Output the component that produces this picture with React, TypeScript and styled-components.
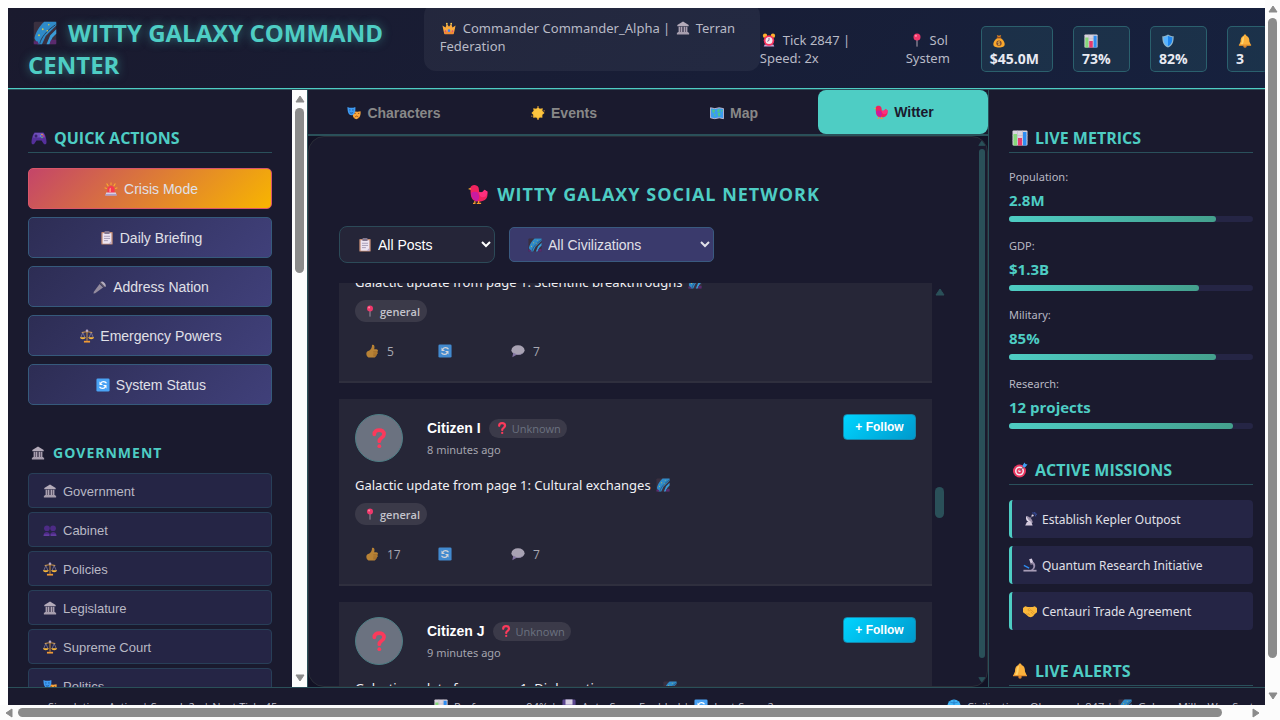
import React, { useLayoutEffect, useRef } from "react";
import styled, { createGlobalStyle, css } from "styled-components";

const ui = '"Open Sans", "Noto Sans", sans-serif';
const control = '"Liberation Sans", Arial, sans-serif';
const reading = '"Noto Sans", "Open Sans", sans-serif';
const teal = "#4ecdc4";
const tealDim = "#2a5059";
const tealFaint = "rgba(78, 205, 196, 0.3)";
const night = "#1a1a2e";

const GlobalStyle = createGlobalStyle`
  * { box-sizing: border-box; }
  body { margin: 0; background: #fff; font-family: ${ui}; color: #e0e0e8; overflow: hidden; }
  h1, h2, h3, p, ul { margin: 0; padding: 0; }
  ul { list-style: none; }
`;

/* ---------- icons ---------- */

const art: Record<string, React.ReactNode> = {
  galaxy: (
    <>
      <rect x="1" y="1" width="30" height="30" rx="2" fill="#3a3040" />
      <path d="M2 23C3 16 9 6 15 1h16v5L17 20l-5 11H6z" fill="#2f8ac8" />
      <path d="M31 11l-8 8-5 12h4l4-9 5-5z" fill="#3a9bd6" />
      <path d="M9 30c2-8 8-16 21-25" fill="none" stroke="#25405e" strokeWidth="1.300" />
      <path d="M1 27h5l2 4H1zM24 25h7v6h-9z" fill="#5a2a6e" />
      <g fill="#d9c84a">
        <circle cx="13" cy="11" r="1.200" /><circle cx="8" cy="19" r="1.200" /><circle cx="21" cy="5" r="1" /><circle cx="19" cy="13" r="1" />
      </g>
    </>
  ),
  crown: (
    <>
      <path d="M1 10l7 5 3-9 5 7 5-7 3 9 7-5-4 19H5z" fill="#fbab3c" />
      <path d="M5 24h22l-1 6H6z" fill="#f08a34" />
      <circle cx="16" cy="22" r="3" fill="#3f7df0" /><circle cx="8" cy="23" r="2" fill="#e0457b" /><circle cx="24" cy="23" r="2" fill="#e0457b" />
      <circle cx="11" cy="6" r="2" fill="#ffd257" /><circle cx="21" cy="6" r="2" fill="#ffd257" />
    </>
  ),
  building: (
    <>
      <path d="M16 1l13 8v3H3V9z" fill="#b4abba" />
      <path d="M6 13h3v12H6zM11.500 13h3v12h-3zM17.500 13h3v12h-3zM23 13h3v12h-3z" fill="#b4abba" />
      <path d="M9 13h2.500v12H9zM14.500 13h3v12h-3zM20.500 13H23v12h-2.500z" fill="#665d72" />
      <path d="M4 25h24v2h2v4H2v-4h2z" fill="#a79eae" />
    </>
  ),
  clock: (
    <>
      <circle cx="7" cy="6" r="5" fill="#ffb02e" /><circle cx="25" cy="6" r="5" fill="#ffb02e" />
      <path d="M6 26l-2 5h24l-2-5z" fill="#c9a3d8" />
      <circle cx="16" cy="17" r="12" fill="#f8315f" /><circle cx="16" cy="17" r="8" fill="#f4e6ee" />
      <path d="M16 11v6l-4 2" fill="none" stroke="#6d5580" strokeWidth="2" />
    </>
  ),
  pin: (
    <>
      <path d="M14.500 15h3v15l-1.500 2-1.500-2z" fill="#8f8797" />
      <circle cx="16" cy="9" r="8" fill="#f0386b" /><circle cx="13.500" cy="6.500" r="2.500" fill="#ff8aa5" />
    </>
  ),
  money: (
    <>
      <path d="M11 2l5 2 5-2-2 6h-6z" fill="#d97b1e" />
      <path d="M12 9h8c6 4 9 10 9 14 0 6-5 8-13 8S3 29 3 23c0-4 3-10 9-14z" fill="#f9a72b" />
      <path d="M11 7h10v3H11z" fill="#8a4b2a" />
      <circle cx="16" cy="21" r="6" fill="#7a4a33" />
      <path d="M18.500 18.500c-2-1.500-5-.8-5 .8 0 2.400 5 1 5 3.400 0 1.700-3 2.300-5 .8M16 16.500v9" fill="none" stroke="#ffc94d" strokeWidth="1.400" />
    </>
  ),
  chart: (
    <>
      <rect x="1" y="1" width="30" height="30" rx="2" fill="#d9d3de" />
      <path d="M1 11h30M1 21h30M11 1v30M21 1v30" stroke="#b9b0c2" strokeWidth="1" />
      <rect x="3" y="8" width="7" height="23" fill="#86d97a" /><rect x="12" y="16" width="8" height="15" fill="#e63b6f" /><rect x="22" y="4" width="7" height="27" fill="#2f8df2" />
    </>
  ),
  shield: (
    <>
      <path d="M16 1c4 3 8 4 13 4 0 13-2 21-13 26C5 26 3 18 3 5c5 0 9-1 13-4z" fill="#8fb6cc" />
      <path d="M16 4c3 2 6 3 10 3.500C26 18 24 24 16 28z" fill="#1d85ee" />
      <path d="M16 4C13 6 10 7 6 7.500 6 18 8 24 16 28z" fill="#58b4ff" />
    </>
  ),
  bell: (
    <>
      <circle cx="16" cy="28" r="3.500" fill="#d9822b" />
      <path d="M16 1c2 0 3 1 3 3 6 2 7 7 7 13l4 9H2l4-9C6 11 7 6 13 4c0-2 1-3 3-3z" fill="#fbb13c" />
      <path d="M14 5C9 8 9 13 9 18l-3 6h5l2-7z" fill="#ffd36b" />
      <path d="M2 24h28v2.500H2z" fill="#e8912d" />
    </>
  ),
  gamepad: (
    <>
      <path d="M7 5h18c4 4 6 14 6 20 0 4-4 5-6 2l-4-6H11l-4 6c-2 3-6 2-6-2C1 19 3 9 7 5z" fill="#55309b" />
      <path d="M8 6h16c2 2 3 5 4 9H4c1-4 2-7 4-9z" fill="#6f4fb8" />
      <path d="M10 9v6M7 12h6" stroke="#271650" strokeWidth="2" />
      <circle cx="22" cy="9" r="1.500" fill="#ffb02e" /><circle cx="25" cy="12" r="1.500" fill="#f8315f" /><circle cx="19" cy="12" r="1.500" fill="#3fa9ff" /><circle cx="22" cy="15" r="1.500" fill="#5fd06a" />
    </>
  ),
  siren: (
    <>
      <path d="M15 1h2v6h-2zM5 4l2-1 4 6-2 1zM27 4l-2-1-4 6 2 1zM1 14l1-2 5 2-1 2zM31 14l-1-2-5 2 1 2z" fill="#ffb02e" />
      <path d="M8 25V17a8 8 0 0116 0v8z" fill="#f8394f" /><path d="M12 23v-6a4 4 0 014-4v10z" fill="#ff8a80" />
      <path d="M5 24h22l2 7H3z" fill="#d8cfe6" /><path d="M3.500 28h25l.5 3H3z" fill="#9d8fc0" />
    </>
  ),
  clipboard: (
    <>
      <rect x="3" y="2" width="26" height="29" rx="2" fill="#c08a72" /><rect x="6" y="5" width="20" height="24" fill="#ede5f2" />
      <rect x="10" y="0" width="12" height="7" rx="2" fill="#82778f" />
      <path d="M9 12h14M9 17h14M9 22h9" stroke="#9f95b0" strokeWidth="2" />
      <path d="M20 29l6-6v6z" fill="#b9a9cc" />
    </>
  ),
  mic: (
    <>
      <path d="M15 9l8 8L5 30l-4 1 1-4z" fill="#948c9e" />
      <path d="M15 7l10 10 4-3L18 3z" fill="#5c5666" />
      <path d="M18 5c3-6 15 6 10 11z" fill="#b5aebf" />
    </>
  ),
  scales: (
    <>
      <path d="M15 2h2v25h-2zM4 7l12-2 12 2v2L16 7 4 9z" fill="#e8a33a" />
      <path d="M6.500 8L1.500 20M6.500 8l5 12M25.500 8l-5 12M25.500 8l5 12" stroke="#a79bb8" strokeWidth="1.300" fill="none" />
      <path d="M0 19h13c0 6-13 6-13 0zM19 19h13c0 6-13 6-13 0z" fill="#f7b63b" />
      <path d="M9 27h14v4H9z" fill="#f09a35" /><circle cx="16" cy="4" r="3" fill="#b7a8c9" />
    </>
  ),
  sync: (
    <>
      <rect x="1" y="1" width="30" height="30" rx="3" fill="#4aa3f5" />
      <path d="M24 12c-3-5-10-5-13-1M8 20c3 5 10 5 13 1" fill="none" stroke="#fff" strokeWidth="3" />
      <path d="M8 8v8h8zM24 24v-8h-8z" fill="#fff" />
    </>
  ),
  people: (
    <g fill="#4d2b86">
      <circle cx="9" cy="12" r="6.500" /><path d="M1 29c0-11 15-11 15 0z" /><circle cx="23" cy="12" r="6.500" /><path d="M16 29c0-11 15-11 15 0z" />
      <path d="M3 26h11v3H1zM18 26h11l2 3H18z" fill="#6d45ae" />
    </g>
  ),
  masks: (
    <>
      <path d="M13 11c5 2 12 3 18 1 1 9-2 17-10 18-7-1-9-8-8-19z" fill="#fba63a" />
      <path d="M1 2c6 3 12 3 18 0 1 10-1 18-9 19C3 20 1 12 1 2z" fill="#3f9bf3" />
      <path d="M5 9h3M12 9h3M6 14c2 3 6 3 8 0" fill="none" stroke="#124a8c" strokeWidth="2" />
      <path d="M17 17h3M25 17h3M18 26c2-4 6-4 8 0" fill="none" stroke="#8a4b1c" strokeWidth="2" />
    </>
  ),
  star: (
    <>
      <path d="M16 2l4 4 7-1-1 6 5 5-5 4 0 7-6-1-4 5-4-5-7 1 0-7-4-4 5-5-1-6 7 1z" fill="#f7bb36" />
      <circle cx="16" cy="16" r="10" fill="#fdc540" />
      <g fill="#f2a93b"><circle cx="16" cy="1.500" r="1.500" /><circle cx="30" cy="11" r="1.500" /><circle cx="16" cy="30.500" r="1.500" /><circle cx="2" cy="23" r="1.500" /></g>
    </>
  ),
  map: (
    <>
      <path d="M1 4l10 2 10-2 10 2v23l-10-2-10 2-10-2z" fill="#3b9cf0" stroke="#c9c0d6" strokeWidth="2" />
      <path d="M4 8l8 1-2 6-3 2zM9 17l4 3-2 6zM17 8l6-1-2 6-4 1zM17 16l6-2 1 6-4 5zM25 8l4 2-3 5z" fill="#4fc48d" />
    </>
  ),
  bird: (
    <>
      <path d="M0 8l6-3v5z" fill="#ffb02e" />
      <path d="M4 6c1-6 11-6 13 0l1 7c4 1 6 0 8-4l5 3c1 8-1 12-5 14-5 3-12 3-17 0-5-4-5-11-5-20z" fill="#f0235f" />
      <path d="M5 14c0 7 3 12 9 14 4-3 5-8 2-14-3-2-7-2-11 0z" fill="#c91ba0" />
      <path d="M17 13c5 1 7 0 9-4l5 3c0 5-2 9-7 9-4 0-6-3-7-8z" fill="#ff2f7d" />
      <path d="M11 27v4H8M17 27v4h-3M17 31h4" fill="none" stroke="#f59a2e" strokeWidth="2" />
    </>
  ),
  question: (
    <>
      <path d="M8.500 10c0-9 15.500-9 15.500 0 0 6-7.500 5-7.500 11" fill="none" stroke="#fb3a5b" strokeWidth="6" strokeLinecap="round" />
      <circle cx="16.500" cy="29" r="3" fill="#fb3a5b" />
    </>
  ),
  thumb: (
    <>
      <path d="M10 15c4-3 6-7 6-13 5-2 7 3 5 10h5c5 1 4 5 2 6 2 2 1 5-1 5 1 3-1 4-2 4 0 3-2 4-5 4h-8c-6 0-9-4-9-9 0-4 3-6 7-7z" fill="#dd9a35" />
      <path d="M19 18h9M19 23h8M19 27h6" stroke="#a9681f" strokeWidth="1.500" />
    </>
  ),
  speech: (
    <>
      <ellipse cx="16" cy="14" rx="15" ry="11" fill="#c9c2d2" /><path d="M5 20l-2 10 11-6z" fill="#9a86bd" />
      <path d="M3 19c6 6 20 6 26 0-3 5-9 6-13 6s-10-1-13-6z" fill="#a596bf" />
    </>
  ),
  target: (
    <>
      <circle cx="15" cy="18" r="13" fill="#e8365f" /><circle cx="15" cy="18" r="9" fill="#f3e8f0" /><circle cx="15" cy="18" r="6" fill="#e8365f" /><circle cx="15" cy="18" r="2.500" fill="#f3e8f0" />
      <path d="M15 18L27 6" stroke="#5a5568" strokeWidth="2" /><path d="M21 7l4-6 2 3 4 1-5 6-4-1z" fill="#3fa0f2" />
    </>
  ),
  satellite: (
    <>
      <path d="M8 9c-4 7 2 17 14 15z" fill="#e4dbec" /><path d="M8 9c1 6 7 13 14 15 1-6-8-15-14-15z" fill="#9c91ab" />
      <path d="M15 16l6-7" stroke="#8e849c" strokeWidth="2" /><circle cx="22" cy="8" r="2.500" fill="#e4dbec" />
      <path d="M21 2c5 0 8 3 8 8M25 1c3 0 6 3 6 6" fill="none" stroke="#3a54a8" strokeWidth="2" />
      <path d="M9 23h10l3 8H5z" fill="#d2c8dc" />
    </>
  ),
  microscope: (
    <>
      <path d="M14 3l6-2 4 10-6 3z" fill="#d5cbe0" /><path d="M16 13l6-3 1 4-5 2z" fill="#716882" />
      <path d="M22 8c9 5 7 16 0 20h-6c8-3 10-10 5-15z" fill="#9b8fae" />
      <path d="M2 17l12 6" stroke="#2f8df2" strokeWidth="3" /><path d="M1 27h30v4H1z" fill="#a79cb6" />
    </>
  ),
  handshake: (
    <>
      <path d="M0 9l5-4 6 2h11l5-2 5 4v10l-5 4-4 5-5 2-5-1-6-5-7-5z" fill="#fcb93b" />
      <path d="M16 8l-5 6c2 3 5 1 7-1l8 8M12 21l4 5M8 21l4 4M18 18l5 6" fill="none" stroke="#d38b25" strokeWidth="1.600" />
    </>
  ),
  disk: (
    <>
      <rect x="1" y="1" width="30" height="30" rx="3" fill="#5b4690" /><rect x="8" y="1" width="16" height="12" fill="#d7cfe2" /><rect x="6" y="17" width="20" height="14" fill="#efe9f5" />
    </>
  ),
  globe: (
    <>
      <circle cx="16" cy="16" r="15" fill="#3fb3f5" /><path d="M1 16h30M16 1v30M6 6c6 4 14 4 20 0M6 26c6-4 14-4 20 0" fill="none" stroke="#1b6fc0" strokeWidth="1.500" />
    </>
  ),
};

const Svg = styled.svg<{ $size: number; $lead: number; $gap: number }>`
  flex: none;
  width: ${(p) => p.$size}px;
  height: ${(p) => p.$size}px;
  margin: 0 ${(p) => p.$gap}px 0 ${(p) => p.$lead}px;
  vertical-align: ${(p) => (p.$size > 18 ? -3 : -2)}px;
`;

function Icon({ name, size = 14, lead = 2, gap = 6 }: { name: string; size?: number; lead?: number; gap?: number }) {
  return (
    <Svg viewBox="0 0 32 32" $size={size} $lead={lead} $gap={gap} aria-hidden="true">
      {art[name]}
    </Svg>
  );
}

/* ---------- scroll bars ---------- */

const Bar = styled.div<{ $horizontal?: boolean; $width: number; $track: string }>`
  flex: none;
  display: flex;
  flex-direction: ${(p) => (p.$horizontal ? "row" : "column")};
  align-items: center;
  ${(p) => (p.$horizontal ? "height" : "width")}: ${(p) => p.$width}px;
  padding: ${(p) => (p.$horizontal ? "0 5px" : p.$width > 12 ? "5px 0" : "2px 0")};
  background: ${(p) => p.$track};
  gap: ${(p) => (p.$width > 12 ? 5 : 2)}px;
`;
const Arrow = styled.svg`
  flex: none;
  display: block;
`;
const Rail = styled.div<{ $horizontal?: boolean }>`
  flex: 1;
  align-self: stretch;
  min-height: 0;
  display: flex;
  flex-direction: ${(p) => (p.$horizontal ? "row" : "column")};
  align-items: center;
`;
const Thumb = styled.div<{ $horizontal?: boolean; $thick: number; $color: string }>`
  flex: none;
  border-radius: 5px;
  background: ${(p) => p.$color};
  ${(p) => (p.$horizontal ? "height" : "width")}: ${(p) => p.$thick}px;
`;

interface ScrollBarProps {
  horizontal?: boolean;
  width?: number;
  thick?: number;
  color?: string;
  track?: string;
  start?: number;
  length: number;
  noEnd?: boolean;
}

function ScrollBar({ horizontal, width = 15, thick = 9, color = "#8b8b8b", track = "#fcfcfc", start = 0, length, noEnd }: ScrollBarProps) {
  const back = horizontal ? "M7 1v8L1 5z" : "M1 7h8L5 1z";
  const forth = horizontal ? "M1 1v8l6-4z" : "M1 1h8L5 7z";
  const long = width > 12;
  const box = horizontal ? { width: 8, height: 10, viewBox: "0 0 8 10" } : { width: long ? 10 : 8, height: 8, viewBox: "0 0 10 8" };
  const span = horizontal ? { width: `${length}%` } : { height: `${length}%` };
  return (
    <Bar $horizontal={horizontal} $width={width} $track={track} aria-hidden="true">
      <Arrow {...box}><path d={back} fill={color} stroke={color} strokeLinejoin="round" /></Arrow>
      <Rail $horizontal={horizontal}>
        {!horizontal && start > 0 && <div style={{ height: `${start}%` }} />}
        <Thumb $horizontal={horizontal} $thick={thick} $color={color} style={span} />
      </Rail>
      {!noEnd && <Arrow {...box}><path d={forth} fill={color} stroke={color} strokeLinejoin="round" /></Arrow>}
    </Bar>
  );
}

/* ---------- page frame ---------- */

const Frame = styled.div`
  display: grid;
  grid-template: minmax(0, 1fr) 15px / minmax(0, 1fr) 15px;
  height: 100vh;
`;
const Viewport = styled.div`
  overflow: hidden;
`;
const Corner = styled.div`
  background: #fcfcfc;
`;
const Shell = styled.div`
  display: grid;
  grid-template-columns: minmax(0, 1fr);
  grid-template-rows: auto minmax(0, 1fr) auto;
  width: 100vw;
  height: 100vh;
  margin: 8px 0 0 8px;
  background: ${night};
`;

/* ---------- header ---------- */

const Header = styled.header`
  display: flex;
  align-items: center;
  height: 81px;
  padding: 1px 20px 0;
  overflow: hidden;
  border-bottom: 1px solid ${teal};
  background: linear-gradient(135deg, ${night} 0%, #16213e 100%);
  font: 13px/18px ${reading};
  color: #b8bac6;
`;
const Brand = styled.h1`
  flex: 1;
  font: 700 24px/32px ${ui};
  color: ${teal};
  text-shadow: 0 0 10px rgba(78, 205, 196, 0.5);
`;
const Commander = styled.div`
  flex: 0 0 336px;
  margin-bottom: 24px;
  padding: 16px;
  border-radius: 12px;
  background: rgba(255, 255, 255, 0.05);
`;
const Tick = styled.div`
  flex: 0 0 121px;
`;
const Place = styled.div`
  flex: 0 0 94px;
  text-align: center;
`;
const Stats = styled.div`
  display: flex;
  gap: 20px;
  margin-left: 6px;
`;
const Stat = styled.div`
  display: flex;
  flex-direction: column;
  min-width: 57px;
  padding: 5px 13px 3px 8px;
  border: 1px solid ${tealFaint};
  border-radius: 5px;
  background: rgba(78, 205, 196, 0.1);
  font: 700 14px/18px ${ui};
  color: #e8eaf2;

  &:last-child { min-width: 0; }
  svg { margin: 2px 2px; }
`;

/* ---------- columns ---------- */

const Main = styled.main`
  display: grid;
  grid-template-columns: 300px minmax(0, 1fr) 300px;
  min-height: 0;
  border-top: 1px solid ${tealDim};
`;
const Left = styled.aside`
  display: flex;
  min-height: 0;
  border-right: 1px solid ${tealDim};
`;
const Right = styled.aside`
  min-height: 0;
  overflow: hidden;
  padding: 37px 35px 0 20px;
  border-left: 1px solid ${tealDim};
`;
const LeftBody = styled.div`
  flex: 1;
  overflow: hidden;
  padding: 37px 20px 0;
`;
const Heading = styled.h2<{ $next?: boolean }>`
  display: flex;
  align-items: center;
  margin-top: ${(p) => (p.$next ? 30 : 0)}px;
  margin-bottom: 15px;
  padding-bottom: 3px;
  border-bottom: 1px solid ${tealFaint};
  font-size: 16px;
  line-height: 22px;
  font-weight: 700;
  color: ${teal};
`;
const SubHeading = styled.h3`
  display: flex;
  align-items: center;
  margin: 38px 0 10px;
  font-size: 14px;
  line-height: 20px;
  letter-spacing: 1px;
  font-weight: 700;
  color: ${teal};
`;
const Stack = styled.div<{ $gap: number }>`
  display: flex;
  flex-direction: column;
  gap: ${(p) => p.$gap}px;
`;
const Action = styled.button<{ $alert?: boolean }>`
  flex: none;
  height: 41px;
  padding: 1px 0 0;
  border: 1px solid ${(p) => (p.$alert ? "#d9566a" : "#365a7c")};
  border-radius: 5px;
  background: ${(p) =>
    p.$alert ? "linear-gradient(135deg, #c44569, #f8b500)" : "linear-gradient(135deg, #2d2d54, #40407a)"};
  font: 14px ${control};
  color: #e0e0e8;
`;
const NavItem = styled.button`
  flex: none;
  height: 35px;
  padding: 2px 12px 0;
  border: 1px solid #283f58;
  border-radius: 4px;
  background: #252545;
  text-align: left;
  font: 13px ${control};
  color: #b8b8c4;
`;

/* ---------- centre ---------- */

const Centre = styled.section`
  display: flex;
  flex-direction: column;
  min-width: 0;
  min-height: 0;
  background: #121225;
`;
const Tabs = styled.nav`
  display: grid;
  grid-template-columns: repeat(4, 1fr);
  height: 46px;
  border-bottom: 2px solid ${tealDim};
  background: ${night};
`;
const Tab = styled.button<{ $active?: boolean }>`
  border: 0;
  border-radius: 8px;
  padding: ${(p) => (p.$active ? 0 : 2)}px 0 0;
  background: ${(p) => (p.$active ? teal : "transparent")};
  font: bold 14px ${control};
  color: ${(p) => (p.$active ? night : "#888")};
`;
const Panel = styled.div`
  flex: 1;
  display: flex;
  min-height: 0;
  border: 1px solid #2a2d38;
  border-radius: 16px;
  background: ${night};
  overflow: hidden;
`;
const Feed = styled.div`
  flex: 1;
  min-width: 0;
  display: flex;
  flex-direction: column;
  padding: 44px 30px 0;
`;
const FeedTitle = styled.h2`
  display: flex;
  justify-content: center;
  align-items: center;
  margin-bottom: 19px;
  font-size: 18px;
  line-height: 26px;
  letter-spacing: 1px;
  font-weight: 700;
  color: ${teal};
`;
const Filters = styled.div`
  display: flex;
  align-items: center;
  gap: 14px;
  margin-bottom: 20px;
`;
const Picker = styled.label`
  position: relative;
  display: flex;
  align-items: center;

  svg { position: absolute; left: 17px; pointer-events: none; }
`;
const Select = styled.select<{ $accent?: boolean }>`
  padding: 0 0 0 34px;
  font: 14px ${control};
  border: 1px solid #2c4a58;
  ${(p) =>
    p.$accent
      ? css`width: 205px; height: 35px; border-radius: 5px; border-color: #3a5a80; background: #3a3a6c; color: #e0e0e8;`
      : css`width: 156px; height: 37px; border-radius: 8px; background: #252538; color: #fff;`}
`;
const PostsRow = styled.div`
  flex: 1;
  display: flex;
  min-height: 0;
`;
const Posts = styled.div`
  flex: 1;
  overflow-y: auto;
  scrollbar-width: none;
`;
const Post = styled.article`
  height: 187px;
  margin-bottom: 16px;
  padding: 15px 16px;
  border-bottom: 2px solid #2f2f3e;
  background: #262637;
`;
const PostTop = styled.div`
  display: flex;
  align-items: flex-start;
  height: 60px;
`;
const Avatar = styled.div`
  display: grid;
  place-items: center;
  width: 48px;
  height: 48px;
  margin-right: 24px;
  border: 1px solid #4d7d84;
  border-radius: 50%;
  background: #6b7280;
`;
const Author = styled.div`
  flex: 1;
  padding-top: 5px;
`;
const NameLine = styled.div`
  display: flex;
  align-items: center;
  gap: 8px;
  height: 18px;
  margin-bottom: 4px;
  font: bold 14px ${control};
  color: #fff;
`;
const Pill = styled.span<{ $tag?: boolean }>`
  display: inline-flex;
  align-items: center;
  height: ${(p) => (p.$tag ? 22 : 19)}px;
  padding: 0 ${(p) => (p.$tag ? 7 : 6)}px;
  border-radius: 11px;
  background: #3b3a49;
  font: ${(p) => (p.$tag ? 600 : 400)} 11px ${ui};
  color: ${(p) => (p.$tag ? "#c4c4cc" : "#6b7280")};
`;
const Ago = styled.div`
  font: 11px/18px ${reading};
  color: #a4a4ae;
`;
const Follow = styled.button`
  width: 73px;
  height: 26px;
  padding: 0;
  border: 1px solid #1587ab;
  border-radius: 4px;
  background: linear-gradient(135deg, #00d4ff, #0099cc);
  font: bold 12px ${control};
  color: #fff;
`;
const Message = styled.p`
  margin-bottom: 7px;
  font: 13px/22px ${reading};
  color: #f0f0f4;
`;
const Reactions = styled.div`
  display: flex;
  margin-top: 19px;
  padding-left: 8px;
`;
const Reaction = styled.button`
  width: 73px;
  height: 20px;
  padding: 0;
  border: 0;
  background: none;
  text-align: left;
  font: 12px ${ui};
  color: #a8a8b2;

  svg { opacity: 0.8; }
`;

/* ---------- metrics and missions ---------- */

const Metric = styled.div`
  font: 11px/18px ${reading};
  color: #b8b8c4;
`;
const MetricValue = styled.div`
  margin: 4px 0 6px;
  font: 700 15px/20px ${ui};
  color: ${teal};
`;
const Gauge = styled.div`
  height: 6px;
  border-radius: 3px;
  background: #252545;
`;
const Fill = styled.div`
  height: 100%;
  border-radius: 3px;
  background: linear-gradient(90deg, ${teal}, #44a08d);
`;
const Mission = styled.li`
  display: flex;
  align-items: center;
  height: 38px;
  padding-left: 9px;
  border-left: 3px solid ${teal};
  border-radius: 4px;
  background: #252545;
  font: 12px ${reading};
  color: #e0e0e8;
`;

const Footer = styled.footer`
  display: grid;
  grid-template-columns: 384px 513px 1fr;
  align-items: center;
  height: 41px;
  padding: 0 0 4px 40px;
  border-top: 1px solid ${tealDim};
  font-size: 11px;
  color: #b8b8c4;
  white-space: nowrap;
`;

/* ---------- content ---------- */

const stats = [["money", "$45.0M"], ["chart", "73%"], ["shield", "82%"], ["bell", "3"]];
const actions = [
  ["siren", "Crisis Mode"], ["clipboard", "Daily Briefing"], ["mic", "Address Nation"], ["scales", "Emergency Powers"], ["sync", "System Status"],
];
const offices = [
  ["building", "Government"], ["people", "Cabinet"], ["scales", "Policies"], ["building", "Legislature"], ["scales", "Supreme Court"], ["masks", "Politics"],
];
const tabs = [["masks", "Characters"], ["star", "Events"], ["map", "Map"], ["bird", "Witter"]];
const metrics: [string, string, number][] = [
  ["Population:", "2.8M", 85], ["GDP:", "$1.3B", 78], ["Military:", "85%", 85], ["Research:", "12 projects", 92],
];
const missions = [
  ["satellite", "Establish Kepler Outpost"], ["microscope", "Quantum Research Initiative"], ["handshake", "Centauri Trade Agreement"],
];
const posts = [
  { name: "Citizen H", ago: "7 minutes ago", topic: "Scientific breakthroughs", likes: 5 },
  { name: "Citizen I", ago: "8 minutes ago", topic: "Cultural exchanges", likes: 17 },
  { name: "Citizen J", ago: "9 minutes ago", topic: "Diplomatic progress", likes: 9 },
];

export default function App() {
  const list = useRef<HTMLDivElement>(null);
  useLayoutEffect(() => {
    if (list.current) list.current.scrollTop = 87;
  }, []);

  return (
    <Frame>
      <GlobalStyle />
      <Viewport>
        <Shell>
          <Header>
            <Brand><Icon name="galaxy" size={24} lead={5} gap={11} />WITTY GALAXY COMMAND CENTER</Brand>
            <Commander>
              <Icon name="crown" gap={7} />Commander Commander_Alpha | <Icon name="building" />Terran Federation
            </Commander>
            <Tick><Icon name="clock" gap={7} />Tick 2847 | Speed: 2x</Tick>
            <Place><Icon name="pin" />Sol<br />System</Place>
            <Stats>
              {stats.map(([icon, value]) => <Stat key={icon}><Icon name={icon} />{value}</Stat>)}
            </Stats>
          </Header>

          <Main>
            <Left>
              <LeftBody>
                <Heading><Icon name="gamepad" size={16} lead={3} gap={7} />QUICK ACTIONS</Heading>
                <Stack $gap={8}>
                  {actions.map(([icon, label]) => (
                    <Action key={label} $alert={icon === "siren"}><Icon name={icon} />{label}</Action>
                  ))}
                </Stack>
                <SubHeading><Icon name="building" lead={3} gap={8} />GOVERNMENT</SubHeading>
                <Stack $gap={4}>
                  {offices.map(([icon, label]) => <NavItem key={label}><Icon name={icon} />{label}</NavItem>)}
                </Stack>
              </LeftBody>
              <ScrollBar length={29.5} />
            </Left>

            <Centre>
              <Tabs>
                {tabs.map(([icon, label]) => (
                  <Tab key={label} $active={label === "Witter"}><Icon name={icon} />{label}</Tab>
                ))}
              </Tabs>
              <Panel>
                <Feed>
                  <FeedTitle><Icon name="bird" size={20} gap={9} />WITTY GALAXY SOCIAL NETWORK</FeedTitle>
                  <Filters>
                    <Picker>
                      <Icon name="clipboard" />
                      <Select aria-label="Post type" defaultValue="all"><option value="all">All Posts</option></Select>
                    </Picker>
                    <Picker>
                      <Icon name="galaxy" />
                      <Select $accent aria-label="Civilization" defaultValue="all"><option value="all">All Civilizations</option></Select>
                    </Picker>
                  </Filters>
                  <PostsRow>
                    <Posts ref={list}>
                      {posts.map((post) => (
                        <Post key={post.name}>
                          <PostTop>
                            <Avatar><Icon name="question" size={20} lead={0} gap={0} /></Avatar>
                            <Author>
                              <NameLine>
                                {post.name}
                                <Pill><Icon name="question" size={12} lead={1} gap={4} />Unknown</Pill>
                              </NameLine>
                              <Ago>{post.ago}</Ago>
                            </Author>
                            <Follow>+ Follow</Follow>
                          </PostTop>
                          <Message>Galactic update from page 1: {post.topic} <Icon name="galaxy" /></Message>
                          <Pill $tag><Icon name="pin" size={12} lead={2} gap={4} />general</Pill>
                          <Reactions>
                            <Reaction aria-label="Like"><Icon name="thumb" gap={8} />{post.likes}</Reaction>
                            <Reaction aria-label="Share"><Icon name="sync" /></Reaction>
                            <Reaction aria-label="Comments"><Icon name="speech" gap={8} />7</Reaction>
                          </Reactions>
                        </Post>
                      ))}
                    </Posts>
                    <ScrollBar color={tealDim} track="transparent" start={49} length={8} noEnd />
                  </PostsRow>
                </Feed>
                <ScrollBar width={10} thick={6} color={tealDim} track="transparent" length={97} />
              </Panel>
            </Centre>

            <Right>
              <Heading><Icon name="chart" size={16} lead={3} gap={7} />LIVE METRICS</Heading>
              <Stack $gap={15}>
                {metrics.map(([label, value, level]) => (
                  <Metric key={label}>
                    {label}
                    <MetricValue>{value}</MetricValue>
                    <Gauge><Fill style={{ width: `${level}%` }} /></Gauge>
                  </Metric>
                ))}
              </Stack>
              <Heading $next><Icon name="target" size={16} lead={3} gap={7} />ACTIVE MISSIONS</Heading>
              <Stack as="ul" $gap={8}>
                {missions.map(([icon, label]) => <Mission key={label}><Icon name={icon} gap={5} />{label}</Mission>)}
              </Stack>
              <Heading $next><Icon name="bell" size={16} lead={3} gap={7} />LIVE ALERTS</Heading>
            </Right>
          </Main>

          <Footer>
            <span>Simulation: Active | Speed: 2x | Next Tick: 45s</span>
            <span><Icon name="chart" />Performance: 94% | <Icon name="disk" />Auto-Save: Enabled | <Icon name="sync" />Last Sync: 2s</span>
            <span><Icon name="globe" />Civilizations Observed: 847 | <Icon name="galaxy" />Galaxy: Milky Way Sector 7</span>
          </Footer>
        </Shell>
      </Viewport>
      <ScrollBar length={95.6} />
      <ScrollBar horizontal length={98} />
      <Corner />
    </Frame>
  );
}
